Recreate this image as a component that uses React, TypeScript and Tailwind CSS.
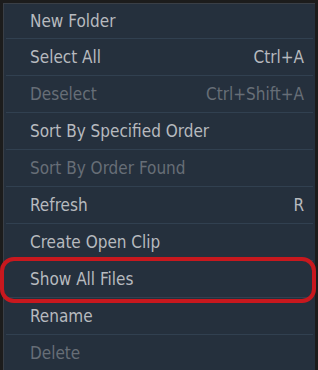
const items = [
  { label: "New Folder" },
  { label: "Select All", shortcut: "Ctrl+A" },
  { label: "Deselect", shortcut: "Ctrl+Shift+A", disabled: true },
  { label: "Sort By Specified Order" },
  { label: "Sort By Order Found", disabled: true },
  { label: "Refresh", shortcut: "R" },
  { label: "Create Open Clip" },
  { label: "Show All Files", highlight: true },
  { label: "Rename" },
  { label: "Delete", disabled: true },
];

export default function App() {
  return (
    <div className="h-[370px] w-[318px] overflow-hidden bg-[#1c1c1c] pl-[3px] pr-[3px] pt-[3px]">
      <div className="h-full border-l border-t border-[#3a3f46] bg-[#25303d] font-['DejaVu_Sans_Condensed','Liberation_Sans_Narrow',sans-serif] text-[17px]">
        {items.map((item, i) => (
          <div key={item.label} className="relative">
            <div
              className={`mx-[2px] flex items-center justify-between border-b border-[#314050] pl-[24px] pr-[9px] pt-[2px] ${
                i === 0 ? "h-[35px]" : "h-[37px]"
              } ${item.disabled ? "text-[#676e77]" : "text-[#b7babf]"}`}
            >
              <span>{item.label}</span>
              {item.shortcut && <span>{item.shortcut}</span>}
            </div>
            {item.highlight && (
              <div className="absolute left-[-4px] right-[-1px] top-[-4px] bottom-[-5px] rounded-[14px] border-[4px] border-[#c8181e]" />
            )}
          </div>
        ))}
      </div>
    </div>
  );
}
